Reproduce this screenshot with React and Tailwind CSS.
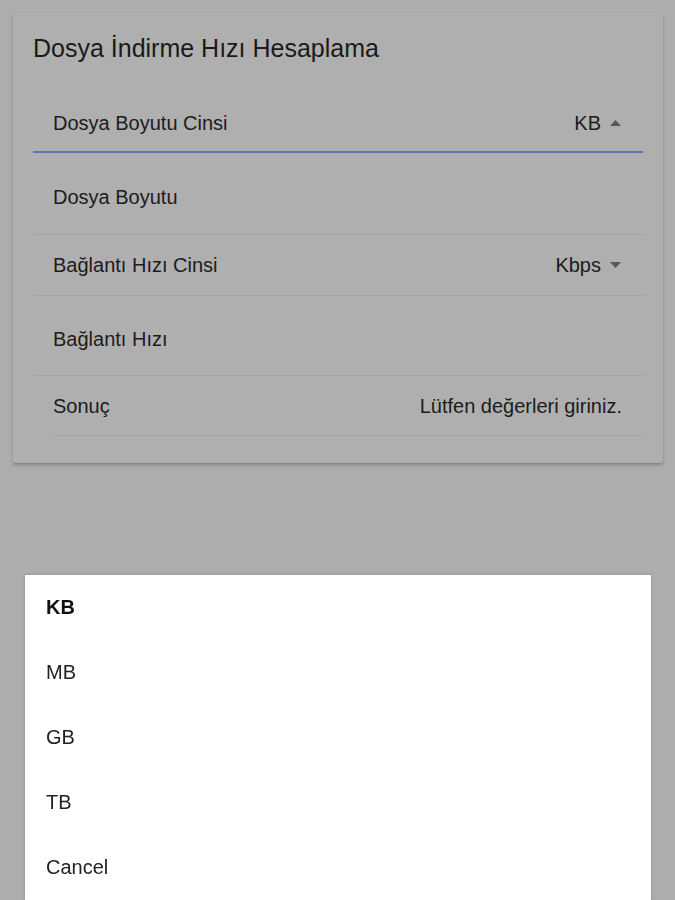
import React from "react";

function Up() {
  return (
    <svg width="11" height="6" viewBox="0 0 11 6" className="ml-[9px]">
      <path d="M0 6 L5.5 0 L11 6 Z" fill="#575757" />
    </svg>
  );
}
function Down() {
  return (
    <svg width="11" height="6" viewBox="0 0 11 6" className="ml-[9px]">
      <path d="M0 0 L5.5 6 L11 0 Z" fill="#575757" />
    </svg>
  );
}

export default function App() {
  return (
    <div className="min-h-[900px] w-full bg-[#adadad] pt-[13px] px-[13px] text-[#1c1c1c] font-['Liberation_Sans',Arial,sans-serif]">
      <div className="w-[650px] bg-[#afafaf] rounded-[3px] shadow-[0_2px_3px_rgba(0,0,0,0.25)] pt-[20px] pb-[27px] pl-[20px] pr-[18px]">
        <div className="text-[25px] leading-[30px] text-[#1a1a1a]">Dosya İndirme Hızı Hesaplama</div>
        <div className="mt-[30px]">
          <div className="h-[60px] mr-[2px] flex items-center justify-between pl-[20px] pr-[22px] pt-[1px] border-b-2 border-[#5b79b4] text-[20px]">
            <span>Dosya Boyutu Cinsi</span>
            <span className="flex items-center">KB<Up /></span>
          </div>
          <div className="h-[82px] flex items-center pl-[20px] pt-[6px] border-b border-[#a3a3a3] text-[20px]">
            <span>Dosya Boyutu</span>
          </div>
          <div className="h-[61px] flex items-center justify-between pl-[20px] pr-[24px] border-b border-[#a3a3a3] text-[20px]">
            <span>Bağlantı Hızı Cinsi</span>
            <span className="flex items-center">Kbps<Down /></span>
          </div>
          <div className="h-[80px] flex items-center pl-[20px] pt-[6px] border-b border-[#a6a6a6] text-[20px]">
            <span>Bağlantı Hızı</span>
          </div>
          <div className="ml-[20px] h-[60px] flex items-center justify-between pr-[23px] border-b border-[#a6a6a6] text-[20px]">
            <span>Sonuç</span>
            <span>Lütfen değerleri giriniz.</span>
          </div>
        </div>
      </div>

      <div className="fixed left-[25px] right-[24px] bottom-0 bg-white shadow-[0_0_3px_rgba(0,0,0,0.2)]">
        {["KB", "MB", "GB", "TB", "Cancel"].map((t, i) => (
          <div
            key={t}
            className={
              i === 0
                ? "h-[65px] flex items-center pl-[21px] pb-[2px] text-[20px] font-bold text-[#111]"
                : "h-[65px] flex items-center pl-[21px] pb-[2px] text-[20px] text-[#222]"
            }
          >
            {t}
          </div>
        ))}
      </div>
    </div>
  );
}
